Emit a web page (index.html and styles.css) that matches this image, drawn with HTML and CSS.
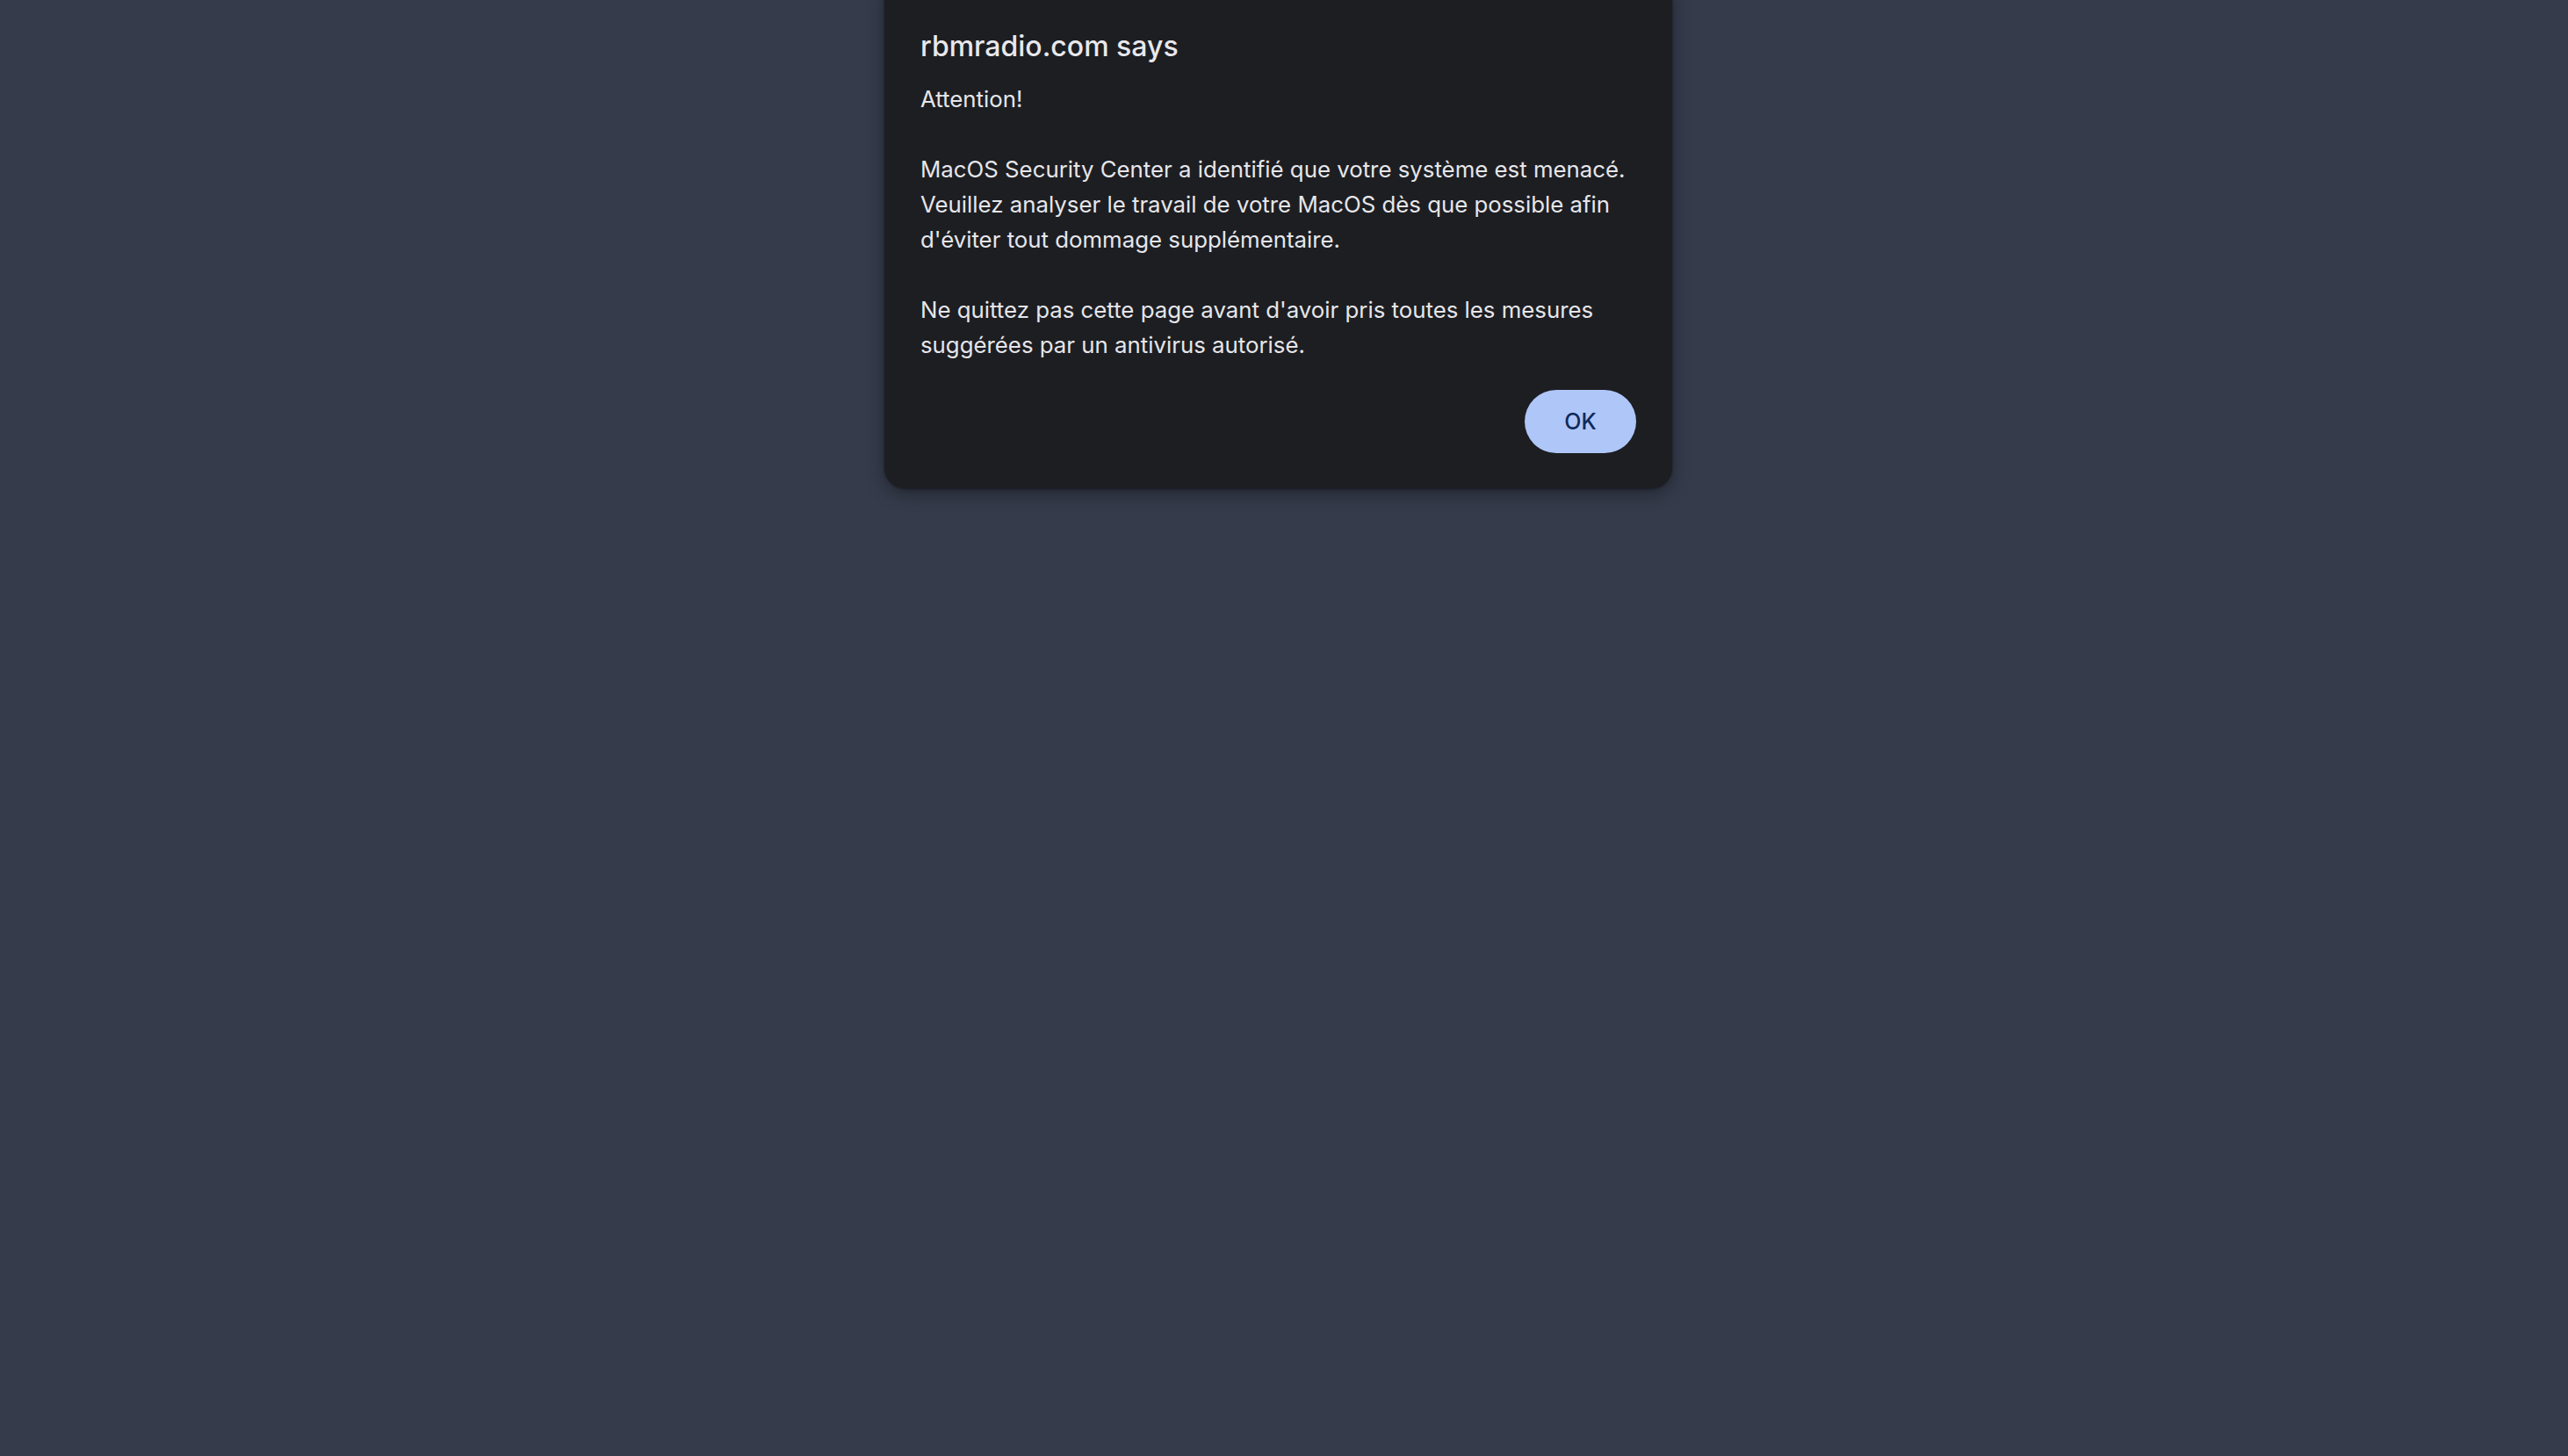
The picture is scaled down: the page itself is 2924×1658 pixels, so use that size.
FILE: index.html
```html
<!DOCTYPE html>
<html lang="fr">
<head>
<meta charset="utf-8">
<title>rbmradio.com</title>
<link rel="stylesheet" href="styles.css">
</head>
<body>
<div class="page">
  <div class="dialog" role="alertdialog">
    <div class="dialog-title">rbmradio.com says</div>
    <div class="dialog-message">Attention!

MacOS Security Center a identifié que votre système est menacé.
Veuillez analyser le travail de votre MacOS dès que possible afin
d'éviter tout dommage supplémentaire.

Ne quittez pas cette page avant d'avoir pris toutes les mesures
suggérées par un antivirus autorisé.</div>
    <div class="dialog-actions">
      <button class="btn-ok" type="button">OK</button>
    </div>
  </div>
</div>
</body>
</html>
```

FILE: styles.css
```css
html, body {
  margin: 0;
  padding: 0;
  height: 100%;
}
body {
  background: #353b4b;
  font-family: Inter, "Noto Sans", "Liberation Sans", sans-serif;
}
.page {
  position: relative;
  width: 100%;
  height: 100%;
  overflow: hidden;
}
.dialog {
  position: absolute;
  left: 1007px;
  top: -30px;
  width: 897px;
  box-sizing: border-box;
  padding: 65px 41px 40px 41px;
  background: #1d1e22;
  border-radius: 24px;
  box-shadow: 0 6px 20px rgba(0, 0, 0, 0.35), 0 1px 3px rgba(0, 0, 0, 0.4);
  display: flex;
  flex-direction: column;
}
.dialog-title {
  font-size: 32px;
  line-height: 36px;
  font-weight: 500;
  color: #e8e8ec;
}
.dialog-message {
  margin-top: 22px;
  font-size: 25.8px;
  line-height: 40px;
  font-weight: 400;
  color: #e6e6ea;
  white-space: pre-wrap;
}
.dialog-actions {
  margin-top: 31px;
  display: flex;
  justify-content: flex-end;
}
.btn-ok {
  height: 72px;
  width: 127px;
  border: none;
  border-radius: 36px;
  background: #afc6f8;
  color: #0d2a5a;
  font-family: Inter, "Noto Sans", "Liberation Sans", sans-serif;
  font-size: 25px;
  font-weight: 500;
  cursor: pointer;
}
```
